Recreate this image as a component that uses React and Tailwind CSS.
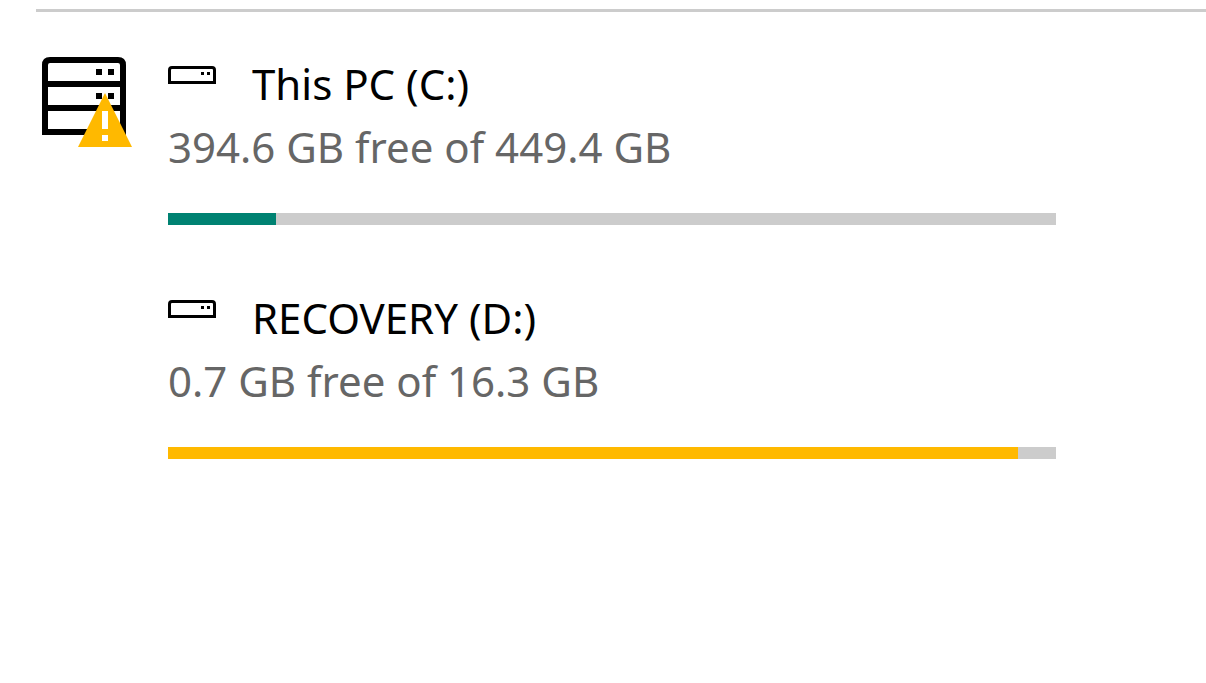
const drives = [
  { id: "c", name: "This PC (C:)", free: 394.6, total: 449.4, percent: 12.2, color: "bg-[#008272]" },
  { id: "d", name: "RECOVERY (D:)", free: 0.7, total: 16.3, percent: 95.7, color: "bg-[#ffb900]" },
];

function StorageWarningIcon() {
  return (
    <svg className="h-24 w-24 shrink-0" viewBox="0 0 96 96" aria-hidden="true">
      <path
        d="M9 80V13q0-5 5-5h68q5 0 5 5v67zM9 32h78M9 56h78"
        fill="none"
        stroke="#000"
        strokeWidth="6"
      />
      <path d="M60 17h6v6h-6zM72 17h6v6h-6zM60 41h6v6h-6zM72 41h6v6h-6z" />
      <path d="M69 41l27 54H42z" fill="#ffb900" />
      <path d="M66 59h6v18h-6zM66 83h6v6h-6z" fill="#fff" />
    </svg>
  );
}

function DriveIcon() {
  return (
    <svg className="mt-3.5 h-6 w-12 shrink-0" viewBox="0 0 48 24" aria-hidden="true">
      <path d="M1.5 16.5V4q0-2.5 2.5-2.5h40q2.5 0 2.5 2.5v12.5z" fill="none" stroke="#000" strokeWidth="3" />
      <path d="M33 6h3v3h-3zM39 6h3v3h-3z" />
    </svg>
  );
}

function Drive({ drive }) {
  return (
    <li>
      <div className="flex items-start gap-9">
        <DriveIcon />
        <h2 id={`drive-${drive.id}`} className="text-[42px] leading-[63px] text-black">{drive.name}</h2>
      </div>
      <p className="text-[42px] leading-[63px] text-[#666666]">
        {drive.free} GB free of {drive.total} GB
      </p>
      <div
        role="progressbar"
        aria-labelledby={`drive-${drive.id}`}
        aria-valuenow={drive.percent}
        aria-valuemin={0}
        aria-valuemax={100}
        className="mt-[35px] h-3 bg-[#cccccc]"
      >
        <div className={`h-full ${drive.color}`} style={{ width: `${drive.percent}%` }} />
      </div>
    </li>
  );
}

export default function App() {
  return (
    <main className="min-h-screen bg-white pt-[9px] pl-9 font-['Noto_Sans',sans-serif]">
      <section className="flex items-start gap-9 border-t-3 border-[#cccccc] pt-10 pr-[150px]">
        <StorageWarningIcon />
        <ul className="min-w-0 flex-1 space-y-[61px]">
          {drives.map((drive) => (
            <Drive key={drive.id} drive={drive} />
          ))}
        </ul>
      </section>
    </main>
  );
}
